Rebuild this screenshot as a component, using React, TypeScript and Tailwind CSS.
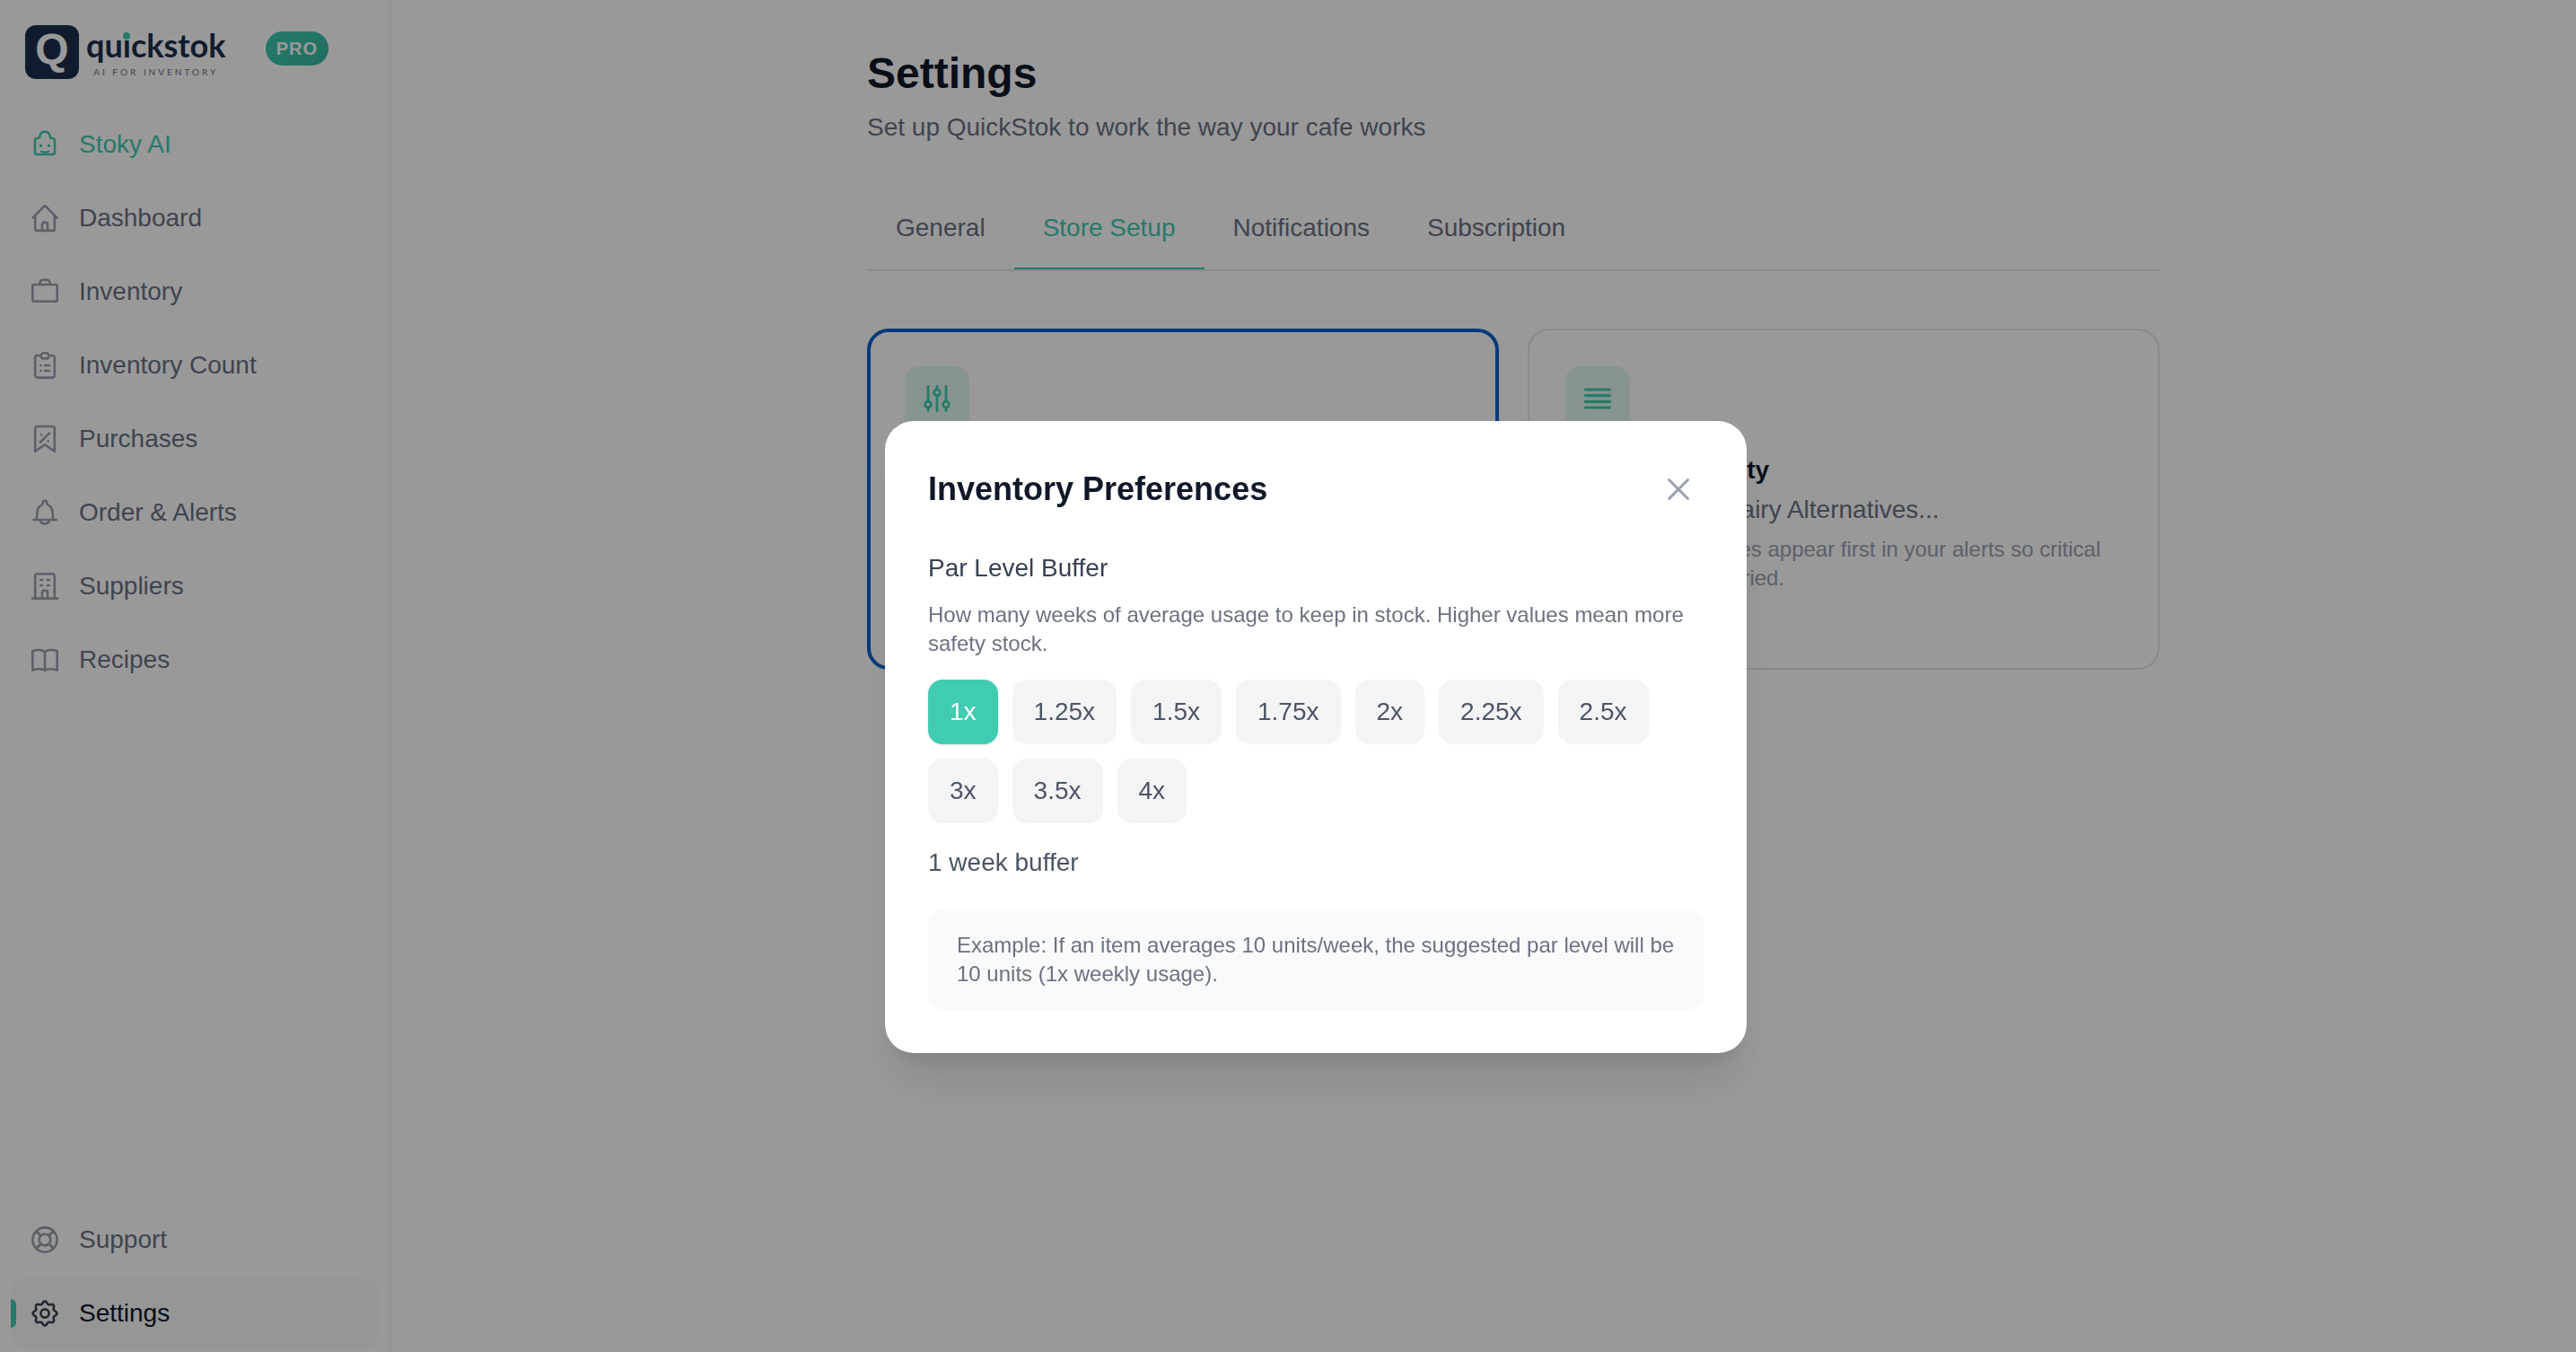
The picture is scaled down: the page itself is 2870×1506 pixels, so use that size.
import React, { useState } from 'react'

type IconProps = { className?: string; children: React.ReactNode }

const Icon = ({ className = '', children }: IconProps) => (
  <svg
    viewBox="0 0 36 36"
    className={`w-9 h-9 shrink-0 ${className}`}
    fill="none"
    stroke="currentColor"
    strokeWidth={2.6}
    strokeLinecap="round"
    strokeLinejoin="round"
    aria-hidden="true"
  >
    {children}
  </svg>
)

// Eight soft teeth around the centre of the 36px box
const GEAR_PATH =
  Array.from({ length: 120 }, (_, i) => {
    const a = (i / 120) * Math.PI * 2
    const r = 12 + 1.4 * Math.cos(8 * a)
    return `${i === 0 ? 'M' : 'L'}${(18 + r * Math.sin(a)).toFixed(2)} ${(18 - r * Math.cos(a)).toFixed(2)}`
  }).join('') + 'Z'

const ICONS: Record<string, React.ReactNode> = {
  stoky: (
    <>
      <path d="M18 3.600c-3.500 0-5.600 2.400-5.700 5.200 0 1.500-.6 2.200-2 2.200h-.7a2.600 2.600 0 0 0-2.600 2.600v12.800a2.600 2.600 0 0 0 2.600 2.600h16.800a2.600 2.600 0 0 0 2.600-2.600v-12.800a2.600 2.600 0 0 0-2.600-2.600h-.7c-1.400 0-2-.7-2-2.200C23.600 6 21.500 3.600 18 3.600z" />
      <path d="M13.500 25.600q4.500 3.200 9 0-4.500 1.400-9 0z" strokeWidth={1.8} fill="currentColor" />
      <circle cx="13.500" cy="19.300" r="1.700" fill="currentColor" stroke="none" />
      <circle cx="22.500" cy="19.300" r="1.700" fill="currentColor" stroke="none" />
    </>
  ),
  home: (
    <>
      <path d="M4.600 17.600 16.900 5a1.500 1.500 0 0 1 2.200 0L31.400 17.600" />
      <path d="M7.200 15v15.300a1.600 1.600 0 0 0 1.600 1.600h18.400a1.600 1.600 0 0 0 1.600-1.600V15" />
      <path d="M15 31.900v-7.200a1.800 1.800 0 0 1 1.800-1.800h2.400a1.800 1.800 0 0 1 1.800 1.800v7.200" />
    </>
  ),
  briefcase: (
    <>
      <rect x="4.300" y="10" width="27.400" height="18.800" rx="1.600" />
      <path d="M12.300 9.800v-1.500l1-2.300a2 2 0 0 1 1.900-1.300h5.600a2 2 0 0 1 1.900 1.300l1 2.300v1.500" />
    </>
  ),
  clipboard: (
    <>
      <path d="M13.200 7H9.600a2.400 2.400 0 0 0-2.400 2.400v19.800a2.400 2.400 0 0 0 2.400 2.400h16.800a2.400 2.400 0 0 0 2.400-2.400V9.400A2.400 2.400 0 0 0 26.400 7h-3.600" />
      <path d="M15.300 4.300h5.400l2.200 2.900-1.300 2.400a1.400 1.400 0 0 1-1.200.8h-4.800a1.400 1.400 0 0 1-1.200-.8l-1.300-2.400z" />
      <path d="M17.800 18h5.400M17.800 24h5.400M13.200 18h.1M13.200 24h.1" />
    </>
  ),
  receipt: (
    <>
      <path d="M7.200 31.800V6.200a2.200 2.200 0 0 1 2.200-2.200h17.200a2.200 2.200 0 0 1 2.200 2.200v25.600L18 24.300z" />
      <path d="M12.900 21.500 23.100 11.400" />
      <path d="M14 13.200h.1M21.700 20.300h.1" />
    </>
  ),
  bell: (
    <>
      <path d="M5.300 26h25.400M8.200 25.900c.9-1.400 1.100-3.400 1.100-7 0-4.700 2.200-8 5.300-9.500.9-.4 1.100-.9 1.100-2.200a2.300 2.300 0 0 1 4.600 0c0 1.300.2 1.800 1.100 2.200 3.100 1.500 5.300 4.800 5.300 9.500 0 3.600.2 5.600 1.100 7" />
      <path d="M12.900 26.200a5.200 5.200 0 0 0 10.200 0" />
    </>
  ),
  building: (
    <>
      <path d="M3.900 31.600h28.200M7.200 31.500V6.600a2.400 2.400 0 0 1 2.400-2.400h16.800a2.400 2.400 0 0 1 2.400 2.400v24.900" />
      <path d="M15 31.500v-7a1.600 1.600 0 0 1 1.600-1.600h2.800a1.600 1.600 0 0 1 1.600 1.600v7" />
      <path d="M13.300 11h1.800M21 11h1.800M13.300 17h1.800M21 17h1.800" />
    </>
  ),
  book: (
    <>
      <path d="M18 9.300v20.300" />
      <path d="M18 9.300c-2.800-2.600-8.600-3.100-13.700-1v21.300c5.100-2.100 10.900-1.600 13.700 0 2.800-1.600 8.600-2.100 13.700 0V8.300c-5.100-2.100-10.900-1.600-13.700 1z" />
    </>
  ),
  support: (
    <>
      <circle cx="18" cy="18" r="13.600" />
      <circle cx="18" cy="18" r="6.400" />
      <path d="M8.600 8.600l4.700 4.700M27.400 8.600l-4.700 4.700M8.600 27.400l4.700-4.700M27.400 27.400l-4.700-4.700" strokeWidth={3} />
    </>
  ),
  settings: (
    <>
      <path d={GEAR_PATH} />
      <circle cx="18" cy="18" r="4.600" />
    </>
  ),
  sliders: (
    <g strokeWidth={2.8}>
      <path d="M8 4.500v16.400M8 28.300v3.200M18 4.500v3.100M18 15v16.500M28 4.500v16.400M28 28.300v3.200" />
      <circle cx="8" cy="24.600" r="3.400" />
      <circle cx="18" cy="11.300" r="3.400" />
      <circle cx="28" cy="24.600" r="3.400" />
    </g>
  ),
  list: <path d="M4.500 8h27M4.500 14.700h27M4.500 21.300h27M4.500 28h27" strokeWidth={3.2} />,
  close: <path d="M7.500 7.500l21 21M28.500 7.500l-21 21" strokeWidth={3} />,
}

const NAV = [
  { label: 'Stoky AI', icon: 'stoky', highlight: true },
  { label: 'Dashboard', icon: 'home' },
  { label: 'Inventory', icon: 'briefcase' },
  { label: 'Inventory Count', icon: 'clipboard' },
  { label: 'Purchases', icon: 'receipt' },
  { label: 'Order & Alerts', icon: 'bell' },
  { label: 'Suppliers', icon: 'building' },
  { label: 'Recipes', icon: 'book' },
]

const TABS = ['General', 'Store Setup', 'Notifications', 'Subscription']

const BUFFERS = [1, 1.25, 1.5, 1.75, 2, 2.25, 2.5, 3, 3.5, 4]

function NavItem({
  label,
  icon,
  highlight,
  active,
}: {
  label: string
  icon: string
  highlight?: boolean
  active?: boolean
}) {
  const text = highlight ? 'text-[#40ccb0]' : active ? 'text-gray-900' : 'text-gray-500'
  const iconColor = highlight ? 'text-[#40ccb0]' : active ? 'text-gray-700' : 'text-gray-400'

  return (
    <a
      href="#"
      className={`relative flex items-center gap-5 h-[78px] px-5 rounded-2xl text-[28px] leading-10 ${text} ${active ? 'bg-gray-50' : ''}`}
    >
      {active && <span className="absolute left-0 top-1/2 -translate-y-1/2 w-1.5 h-8 rounded-r-md bg-[#40ccb0]" />}
      <Icon className={iconColor}>{ICONS[icon]}</Icon>
      {label}
    </a>
  )
}

function Logo() {
  return (
    <div className="flex items-start">
      <div className="w-[60px] h-[60px] pb-1.5 rounded-xl bg-[#1b2f4d] text-white flex items-center justify-center font-bold text-5xl leading-none">
        Q
      </div>
      <div className="ml-2 flex flex-col items-center font-['Lato',sans-serif] text-[#1b2f4d]">
        <span className="text-4xl leading-11 font-bold">
          qu
          <span className="relative">
            i
            <span className="absolute left-1/2 -translate-x-1/2 top-2 w-2 h-2 rounded-full bg-[#40ccb0]" />
          </span>
          ckstok
        </span>
        <span className="text-[10px] leading-4 tracking-[3px] text-gray-500">AI FOR INVENTORY</span>
      </div>
    </div>
  )
}

function Sidebar() {
  return (
    <aside className="w-[436px] shrink-0 border-r-2 border-gray-100 flex flex-col justify-between px-3 pb-1">
      <div>
        <div className="flex items-start justify-between pt-7 pl-4 pr-14">
          <Logo />
          <span className="mt-[7px] px-3 rounded-full bg-gradient-to-br from-[#40ccb0] to-[#35b79c] text-white text-xl leading-[38px] font-bold tracking-wider">
            PRO
          </span>
        </div>
        <nav className="mt-[34px] flex flex-col gap-1">
          {NAV.map((item) => (
            <NavItem key={item.label} {...item} />
          ))}
        </nav>
      </div>
      <nav className="flex flex-col gap-1">
        <NavItem label="Support" icon="support" />
        <NavItem label="Settings" icon="settings" active />
      </nav>
    </aside>
  )
}

function SetupCard({
  icon,
  title,
  value,
  description,
  selected,
}: {
  icon: string
  title: string
  value: string
  description: string
  selected?: boolean
}) {
  return (
    <button
      type="button"
      className={`flex flex-col items-start text-left min-h-[380px] rounded-3xl ${
        selected ? 'border-4 border-[#0062cc] p-[38px]' : 'border-2 border-gray-200 p-10'
      }`}
    >
      <span className="w-[72px] h-[72px] rounded-2xl bg-[#e3f7f2] text-[#40ccb0] flex items-center justify-center">
        <Icon>{ICONS[icon]}</Icon>
      </span>
      <span className="mt-6 text-[28px] leading-10 font-bold text-gray-900">{title}</span>
      <span className="mt-1 text-[28px] leading-10 text-gray-500">{value}</span>
      <span className="mt-2 text-2xl leading-8 text-gray-400">{description}</span>
    </button>
  )
}

function PreferencesModal() {
  const [buffer, setBuffer] = useState(1)

  return (
    <div className="fixed inset-0 bg-black/40 flex items-center justify-center pl-[62px] pt-[136px]">
      <div
        role="dialog"
        aria-modal="true"
        aria-labelledby="preferences-title"
        className="w-full max-w-[960px] rounded-[32px] bg-white p-12 shadow-[0_40px_50px_-10px_rgba(0,0,0,0.1),0_16px_20px_-12px_rgba(0,0,0,0.1)]"
      >
        <div className="flex items-center justify-between">
          <h2 id="preferences-title" className="text-4xl font-bold text-gray-900">
            Inventory Preferences
          </h2>
          <button type="button" aria-label="Close" className="w-14 h-14 flex items-center justify-center text-gray-400">
            <Icon>{ICONS.close}</Icon>
          </button>
        </div>

        {/* Par level */}
        <h3 className="mt-10 text-[28px] leading-10 text-gray-700">Par Level Buffer</h3>
        <p className="mt-4 text-2xl leading-8 text-gray-500">
          How many weeks of average usage to keep in stock. Higher values mean more safety stock.
        </p>
        <div className="mt-6 flex flex-wrap gap-4">
          {BUFFERS.map((value) => (
            <button
              key={value}
              type="button"
              aria-pressed={value === buffer}
              onClick={() => setBuffer(value)}
              className={`px-6 py-4 rounded-2xl text-[28px] leading-10 ${
                value === buffer ? 'bg-[#40ccb0] text-white shadow-sm' : 'bg-gray-100 text-gray-600'
              }`}
            >
              {value}x
            </button>
          ))}
        </div>
        <p className="mt-6 text-[28px] leading-10 text-gray-600">
          {buffer} {buffer === 1 ? 'week' : 'weeks'} buffer
        </p>

        <p className="mt-8 px-8 py-6 rounded-2xl bg-gray-50 text-2xl leading-8 text-gray-500">
          Example: If an item averages 10 units/week, the suggested par level will be {buffer * 10} units ({buffer}x
          weekly usage).
        </p>
      </div>
    </div>
  )
}

export default function App() {
  return (
    <div className="flex min-h-screen bg-white font-['Liberation_Sans',Arial,sans-serif]">
      <Sidebar />

      <main className="flex-1 pl-[66px] pt-[50px]">
        <div className="mx-auto w-full max-w-[1440px]">
          <h1 className="text-5xl leading-[64px] font-bold text-gray-900">Settings</h1>
          <p className="mt-2 text-[28px] leading-10 text-gray-500">Set up QuickStok to work the way your cafe works</p>

          <div role="tablist" className="mt-12 flex border-b-2 border-gray-200">
            {TABS.map((tab) => (
              <button
                key={tab}
                type="button"
                role="tab"
                aria-selected={tab === 'Store Setup'}
                className={`px-8 py-6 text-[28px] leading-10 border-b-2 ${
                  tab === 'Store Setup' ? 'border-[#40ccb0] text-[#40ccb0]' : 'border-transparent text-gray-500'
                }`}
              >
                {tab}
              </button>
            ))}
          </div>

          <div className="mt-16 grid grid-cols-2 gap-8">
            <SetupCard
              selected
              icon="sliders"
              title="Inventory Preferences"
              value="1 week buffer"
              description="How many weeks of average usage to keep in stock."
            />
            <SetupCard
              icon="list"
              title="Category Priority"
              value="Coffee, Meat, Dairy Alternatives..."
              description="Important categories appear first in your alerts so critical items never get buried."
            />
          </div>
        </div>
      </main>

      <PreferencesModal />
    </div>
  )
}
